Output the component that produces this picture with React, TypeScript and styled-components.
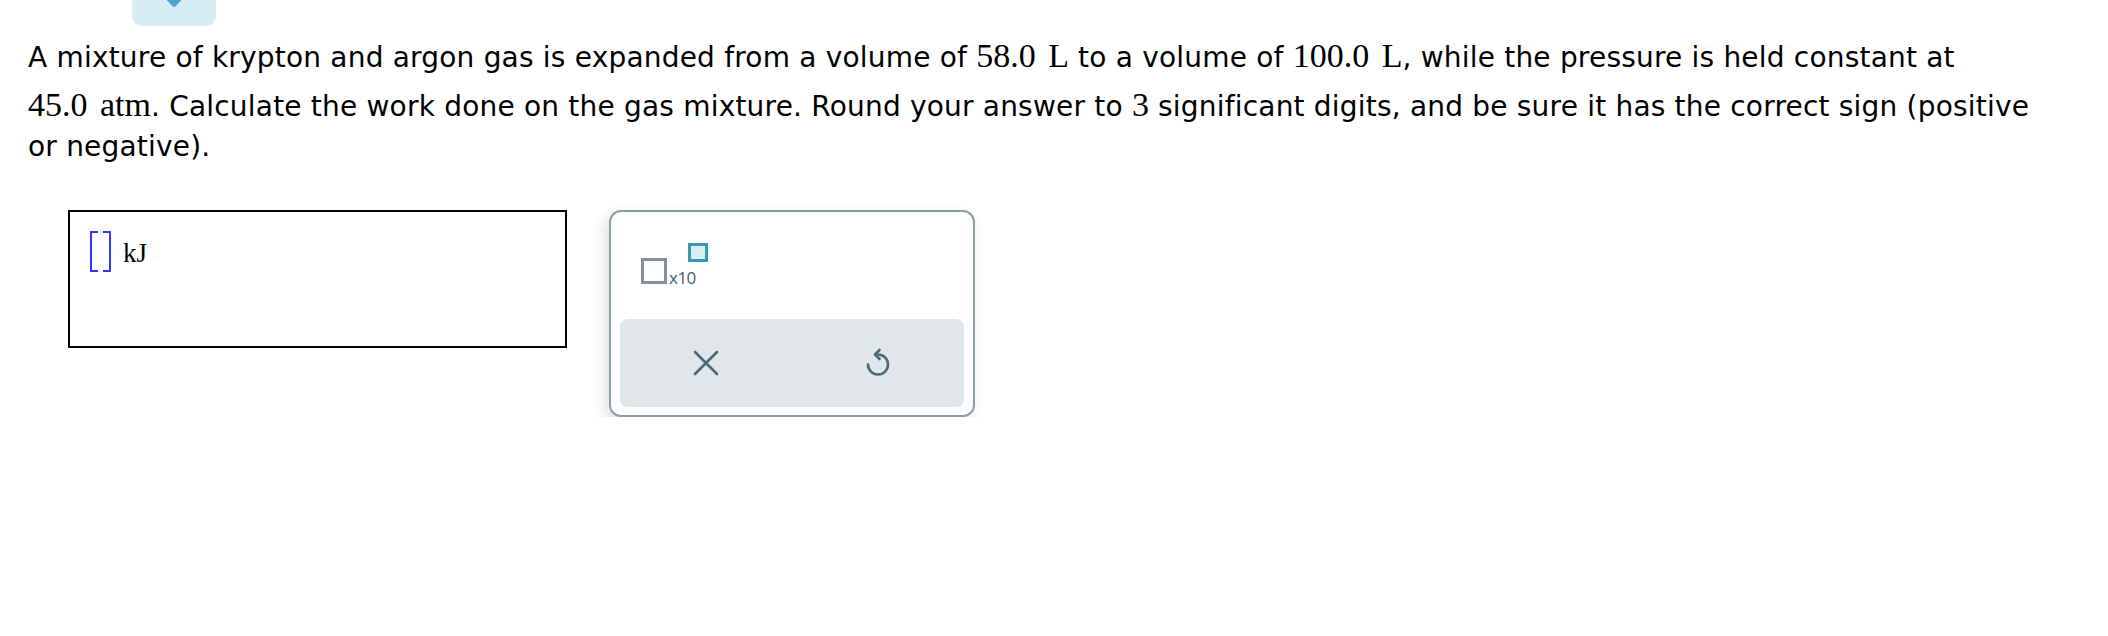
import React from "react";
import styled, { createGlobalStyle } from "styled-components";

const Global = createGlobalStyle`
  html, body { margin: 0; padding: 0; background: #ffffff; }
  body { font-family: "DejaVu Sans", Verdana, sans-serif; color: #000; }
`;

const Page = styled.div`
  display: flex;
  flex-direction: column;
  padding: 0 0 0 28px;
  width: 2108px;
  box-sizing: border-box;
`;

const Tab = styled.button`
  display: flex;
  justify-content: center;
  align-items: flex-start;
  margin-left: 104px;
  width: 84px;
  height: 26px;
  padding: 0;
  border: none;
  border-radius: 0 0 10px 10px;
  background: #d5edf3;
`;

const Question = styled.p`
  margin: 3px 0 0;
  font-size: 28px;
  letter-spacing: 0.2px;
  line-height: 40px;
  white-space: nowrap;
`;

const Math = styled.span`
  display: inline-block;
  font-family: "Liberation Serif", "Times New Roman", serif;
  font-size: 34px;
  line-height: 34px;
  padding-top: 10px;
  letter-spacing: 0;
  word-spacing: 4px;
`;

const AnswerRow = styled.div`
  display: flex;
  align-items: flex-start;
  gap: 42px;
  margin: 43px 0 0 40px;
`;

const AnswerBox = styled.div`
  display: flex;
  align-items: flex-start;
  gap: 12px;
  box-sizing: border-box;
  width: 499px;
  height: 138px;
  padding: 19px 0 0 20px;
  border: 2px solid #000;
`;

const Cursor = styled.svg`
  display: block;
  flex: none;
`;

const Unit = styled.span`
  font-family: "Liberation Serif", "Times New Roman", serif;
  font-size: 27px;
  line-height: 41px;
  margin-top: 2px;
`;

const Panel = styled.div`
  display: flex;
  flex-direction: column;
  justify-content: space-between;
  box-sizing: border-box;
  width: 366px;
  height: 207px;
  padding: 0 9px 8px;
  border: 2px solid #8c9ea8;
  border-radius: 12px;
  background: #fff;
  box-shadow: -4px 6px 14px rgba(40, 60, 70, 0.16);
`;

const Widget = styled.div`
  display: flex;
  align-items: flex-start;
  margin: 31px 0 0 21px;
`;

const BaseSquare = styled.span`
  display: block;
  box-sizing: border-box;
  width: 26px;
  height: 26px;
  margin-top: 15px;
  border: 3px solid #7d929b;
`;

const Exp = styled.span`
  font-family: "Open Sans", "DejaVu Sans", sans-serif;
  font-size: 17px;
  line-height: 17px;
  font-weight: 500;
  color: #45616e;
  margin: 26px 0 0 2px;
  letter-spacing: -0.5px;
`;

const SupSquare = styled.span`
  display: block;
  box-sizing: border-box;
  width: 20px;
  height: 19px;
  margin-left: -8px;
  border: 3px solid #3b98b3;
  background: #d6eef4;
`;

const ButtonBar = styled.div`
  display: flex;
  height: 88px;
  border-radius: 8px;
  background: #e1e6e9;
`;

const IconButton = styled.button`
  flex: 1;
  display: flex;
  align-items: center;
  justify-content: center;
  padding: 0;
  border: none;
  background: transparent;
  color: #4b6a78;
`;

export default function App() {
  return (
    <>
      <Global />
      <Page>
        <Tab aria-label="collapse">
          <svg width="26" height="12" viewBox="0 0 26 12">
            <polyline
              points="3,-7 13,4 23,-7"
              fill="none"
              stroke="#4aa6c6"
              strokeWidth="5.5"
              strokeLinejoin="round"
            />
          </svg>
        </Tab>
        <Question>
          A mixture of krypton and argon gas is expanded from a volume of <Math>58.0 L</Math> to a volume of{" "}
          <Math>100.0 L</Math>, while the pressure is held constant at
          <br />
          <Math>45.0 atm</Math>. Calculate the work done on the gas mixture. Round your answer to <Math>3</Math>{" "}
          significant digits, and be sure it has the correct sign (positive
          <br />
          or negative).
        </Question>
        <AnswerRow>
          <AnswerBox>
            <Cursor width="21" height="41" viewBox="0 0 21 41">
              <path
                d="M8 1 H1 V40 H8 M13 1 H20 V40 H13"
                fill="none"
                stroke="#3535ff"
                strokeWidth="2"
              />
            </Cursor>
            <Unit>kJ</Unit>
          </AnswerBox>
          <Panel>
            <Widget>
              <BaseSquare />
              <Exp>x10</Exp>
              <SupSquare />
            </Widget>
            <ButtonBar>
              <IconButton aria-label="clear">
                <svg width="26" height="26" viewBox="0 0 26 26">
                  <path d="M2 2 L24 24 M24 2 L2 24" stroke="currentColor" strokeWidth="2.6" strokeLinecap="round" />
                </svg>
              </IconButton>
              <IconButton aria-label="undo">
                <svg width="28" height="30" viewBox="0 0 28 30">
                  <path
                    d="M14 6.5 A10 10 0 1 1 4 16.5"
                    fill="none"
                    stroke="currentColor"
                    strokeWidth="2.6"
                    strokeLinecap="round"
                  />
                  <path
                    d="M15.5 2 L11 6.5 L15.5 11"
                    fill="none"
                    stroke="currentColor"
                    strokeWidth="2.6"
                    strokeLinecap="round"
                    strokeLinejoin="round"
                  />
                </svg>
              </IconButton>
            </ButtonBar>
          </Panel>
        </AnswerRow>
      </Page>
    </>
  );
}
